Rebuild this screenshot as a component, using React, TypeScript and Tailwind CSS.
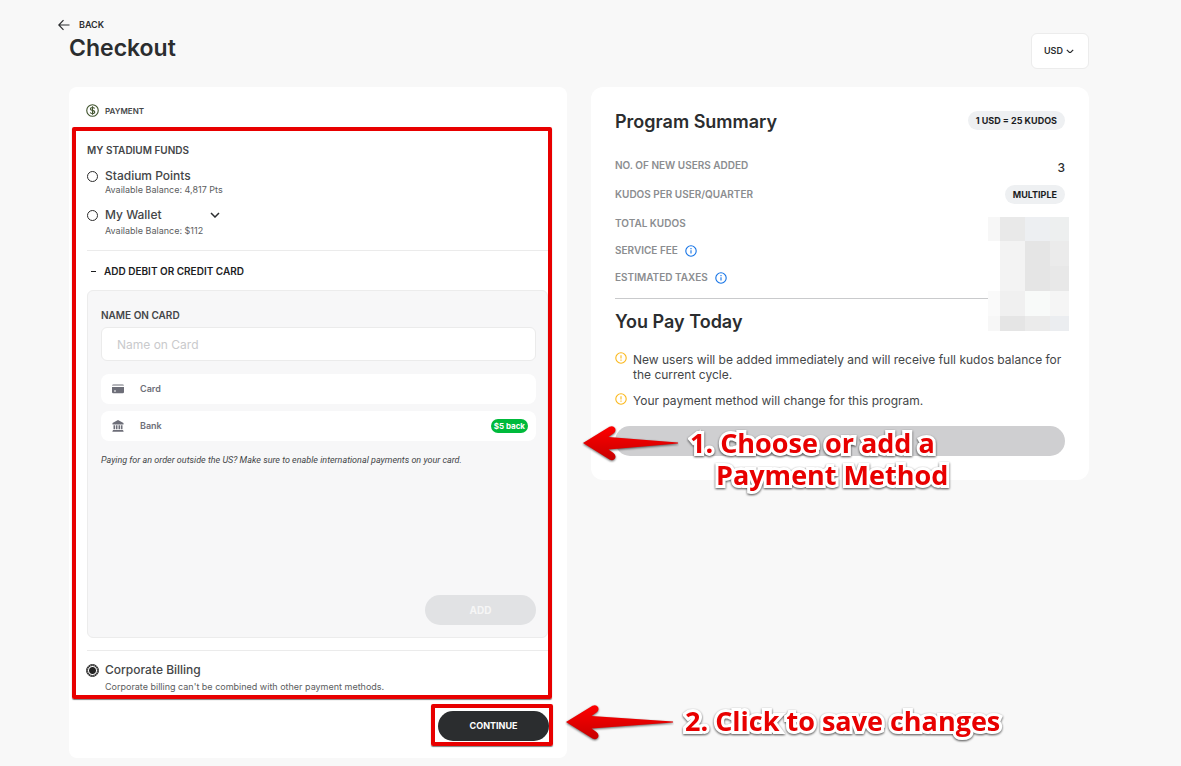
import type { ReactNode } from "react";

const MOSAIC = [
  "bg-[#f7f7f7]", "bg-[#e9e9e9]", "bg-[#edeff2]", "bg-[#edefef]",
  "bg-white", "bg-[#f3f3f3]", "bg-[#e5e5e5]", "bg-[#ebebeb]",
  "bg-white", "bg-[#f3f3f3]", "bg-[#e5e5e5]", "bg-[#e8e8e8]",
  "bg-[#fafafa]", "bg-[#f0f0f0]", "bg-[#f8faf9]", "bg-[#f5f5f5]",
  "bg-[#f7f7f7]", "bg-[#e5e5e5]", "bg-[#ebebeb]", "bg-[#ebedf0]",
];

function Chevron({ className }: { className: string }) {
  return (
    <svg viewBox="0 0 10 6" className={className} fill="none" stroke="currentColor" strokeWidth="1.5" aria-hidden="true">
      <path d="M1 1l4 4 4-4" />
    </svg>
  );
}

function InfoIcon() {
  return (
    <svg viewBox="0 0 12 12" className="size-3 text-[#1473e6]" fill="none" stroke="currentColor" aria-hidden="true">
      <circle cx="6" cy="6" r="5.2" strokeWidth="1.1" />
      <path d="M6 5.2v3.4M6 3v1.2" strokeWidth="1.1" />
    </svg>
  );
}

function AlertIcon() {
  return (
    <svg viewBox="0 0 12 12" className="size-3 shrink-0 text-[#fbb81b]" fill="none" stroke="currentColor" aria-hidden="true">
      <circle cx="6" cy="6" r="5.2" strokeWidth="1.1" />
      <path d="M6 3.2v3.4M6 7.6v1.2" strokeWidth="1.1" />
    </svg>
  );
}

function Arrow({ id, length, className }: { id: string; length: number; className: string }) {
  return (
    <svg viewBox={`0 0 ${length} 38`} width={length} height={38} className={className} aria-hidden="true">
      <defs>
        <linearGradient id={id} x1="0" y1="0" x2="0" y2="1">
          <stop offset="0" stopColor="#ff0000" />
          <stop offset="1" stopColor="#c80000" />
        </linearGradient>
      </defs>
      <path
        d={`M1 18L27.500 1.800Q31 0 33 3Q34.500 6.500 31.500 8.500L26.500 12L${length - 1} 17.500V18.500L26.500 24.500L31.500 28Q34.500 30.500 33 33.500Q31 36.500 27.500 34.500Z`}
        fill={`url(#${id})`}
        className="drop-shadow-[0_1px_1px_rgba(0,0,0,0.6)]"
      />
    </svg>
  );
}

function Radio({ id, checked, className, children }: { id: string; checked?: boolean; className: string; children: ReactNode }) {
  return (
    <div className={`flex items-center gap-[7px] ${className}`}>
      <input
        id={id}
        type="radio"
        name="method"
        defaultChecked={checked}
        className="size-[11px] appearance-none rounded-full border border-[#2c2c2c] bg-white outline-[#2c2c2c] checked:bg-[radial-gradient(circle,#222_0_3px,#fff_4px)] checked:outline"
      />
      <label htmlFor={id} className="text-[12px] font-medium text-[#444648]">
        {children}
      </label>
    </div>
  );
}

function SummaryRow({ label, info, className, children }: { label: string; info?: boolean; className: string; children?: ReactNode }) {
  return (
    <div className={`flex items-center justify-between ${className}`}>
      <dt className="flex items-center gap-[7px] text-[10px] font-semibold text-[#8b8d90]">
        {label}
        {info && <InfoIcon />}
      </dt>
      <dd>{children}</dd>
    </div>
  );
}

const pill = "rounded-full bg-[#eef0f2] px-2 text-[9px] leading-[19px] font-bold text-[#1c1d1f]";
const callout =
  "absolute whitespace-nowrap font-['Open_Sans','Noto_Sans',sans-serif] text-[27px] leading-8 font-bold text-[#e80000] [-webkit-text-stroke:6px_white] [paint-order:stroke_fill] drop-shadow-[0_1px_1px_rgba(0,0,0,0.7)]";

export default function App() {
  return (
    <main className="relative min-h-screen bg-[#f8f8f8] pr-[92px] pb-2 pl-[69px] font-['Inter','Liberation_Sans',sans-serif] text-[#2b2d2f]">
      <header className="flex h-[87px] items-start justify-between">
        <div>
          <a href="#back" className="mt-[18px] -ml-[11px] flex h-[14px] items-center gap-[9px] text-[9px] font-semibold">
            <svg viewBox="0 0 12 12" className="size-3" fill="none" stroke="currentColor" strokeWidth="1.2" aria-hidden="true">
              <path d="M11.500 6H1M5.500 1.200L.8 6l4.700 4.800" />
            </svg>
            BACK
          </a>
          <h1 className="text-[23px] leading-8 font-semibold">Checkout</h1>
        </div>
        <label className="mt-[33px] flex h-9 items-center gap-[3px] rounded-md border border-[#ececec] bg-white pr-[14px] pl-3 text-[9px] font-semibold">
          <select aria-label="Currency" className="appearance-none bg-transparent">
            <option>USD</option>
          </select>
          <Chevron className="w-2" />
        </label>
      </header>

      <div className="grid grid-cols-2 items-start gap-6">
        <form className="rounded-lg bg-white pt-4 pr-[15px] pb-[17px] pl-[3px]">
          <h2 className="flex h-[15px] items-center gap-[6px] pl-[14px] text-[8px] font-semibold text-[#444648]">
            <svg viewBox="0 0 14 14" className="size-[13px] text-[#40532d]" fill="none" stroke="currentColor" aria-hidden="true">
              <circle cx="7" cy="7" r="6.200" strokeWidth="1.200" />
              <path d="M9.300 4.800C8.800 4 8 3.800 7 3.800c-1.300 0-2.300.5-2.300 1.500C4.700 7.400 9.400 6.300 9.400 8.600c0 1.100-1 1.700-2.400 1.700-1.200 0-2.100-.4-2.500-1.300M7 2.300v9.400" strokeWidth="1.200" />
            </svg>
            PAYMENT
          </h2>

          <section className="relative mt-[9px] pt-4 pr-1 pb-[5px] pl-[15px]">
            <h3 className="text-[10px] leading-[14px] font-semibold text-[#444648]">MY STADIUM FUNDS</h3>
            <Radio id="points" className="mt-3 h-[14px]">Stadium Points</Radio>
            <p className="pl-[18px] text-[9px] leading-[14px] text-[#5b5d60]">Available Balance: 4,817 Pts</p>
            <div className="mt-[11px] flex w-[133px] items-center justify-between">
              <Radio id="wallet" className="h-[14px]">My Wallet</Radio>
              <button type="button" aria-label="Show wallets">
                <Chevron className="w-[10px]" />
              </button>
            </div>
            <p className="mt-[2px] pl-[18px] text-[9px] leading-[14px] text-[#5b5d60]">Available Balance: $112</p>

            <div className="mt-3 border-t border-[#ebebeb] pt-[13px]">
              <button type="button" aria-expanded="true" className="flex h-[14px] items-center gap-2 pl-1 text-[10px] font-semibold text-[#1c1d1f]">
                <span className="h-px w-[5px] bg-current" />
                ADD DEBIT OR CREDIT CARD
              </button>
            </div>

            <div className="mt-3 flex flex-col rounded-md border border-[#ececec] bg-[#f7f7f8] pt-[17px] pr-[11px] pb-3 pl-[13px]">
              <label htmlFor="card-name" className="text-[10px] leading-[14px] font-semibold text-[#444648]">NAME ON CARD</label>
              <input
                id="card-name"
                placeholder="Name on Card"
                className="mt-[5px] h-[34px] rounded-md border border-[#ebebeb] bg-white px-[15px] text-[12px] placeholder:text-[#c9cacc]"
              />
              <button type="button" className="mt-[13px] flex h-[30px] items-center gap-4 rounded-lg bg-white px-[11px] text-[9px] font-semibold text-[#6d6e78]">
                <svg viewBox="0 0 12 10" className="w-3" fill="currentColor" aria-hidden="true">
                  <path d="M1.500.5h9Q12 .5 12 1.500H0Q0 .5 1.500.5ZM0 3h12v5q0 1.300-1.300 1.300H1.300Q0 9.300 0 8ZM2 6.500v1h2v-1Z" fillRule="evenodd" />
                </svg>
                Card
              </button>
              <button type="button" className="mt-[7px] flex h-[30px] items-center gap-4 rounded-lg bg-white pr-2 pl-[11px] text-[9px] font-semibold text-[#6d6e78]">
                <svg viewBox="0 0 12 12" className="w-3" fill="currentColor" aria-hidden="true">
                  <path d="M6 0l5.500 3v1.500H.5V3ZM1.500 5.300h1.700v4H1.500ZM4 5.300h1.500v4H4ZM6.500 5.300H8v4H6.500ZM8.800 5.300h1.700v4H8.800ZM1 10h10l.7 1.700H.3Z" />
                </svg>
                Bank
                <span className="ml-auto rounded-full bg-[#00ba3c] px-[3px] text-[8px] leading-[14px] font-bold text-white">$5 back</span>
              </button>
              <p className="mt-3 font-['Roboto','Liberation_Sans',sans-serif] text-[9px] leading-[14px] text-[#444648] italic">
                Paying for an order outside the US? Make sure to enable international payments on your card.
              </p>
              <button type="button" disabled className="mt-32 h-[30px] w-[111px] self-end rounded-full bg-[#e1e2e4] text-[10px] font-bold text-[#f6f6f6]">
                ADD
              </button>
            </div>

            <div className="mt-3 border-t border-[#ebebeb] pt-3">
              <Radio id="corporate" checked className="h-[14px]">Corporate Billing</Radio>
              <p className="mt-[3px] pl-[18px] text-[9px] leading-[14px] text-[#5b5d60]">
                Corporate billing can't be combined with other payment methods.
              </p>
            </div>
            <div className="pointer-events-none absolute inset-0 rounded-xs border-4 border-[#e80000] shadow-[0_1px_1px_rgba(0,0,0,0.5)]" />
          </section>

          <div className="relative mt-3 mr-[3px] ml-auto w-[111px]">
            <button type="submit" className="h-[30px] w-full rounded-full bg-[#2b2d2f] text-[9px] font-bold text-white">CONTINUE</button>
            <div className="pointer-events-none absolute -top-[7px] -right-1 -bottom-[5px] -left-[7px] rounded-xs border-4 border-[#e80000] shadow-[0_1px_1px_rgba(0,0,0,0.5)]" />
          </div>
        </form>

        <section className="relative rounded-xl bg-white p-6">
          <div className="flex h-[22px] items-start justify-between">
            <h2 className="text-[18px] leading-[22px] font-semibold">Program Summary</h2>
            <span className={pill}>1 USD = 25 KUDOS</span>
          </div>
          <dl className="mt-[18px] border-b border-[#c9cacc] pb-[7px]">
            <SummaryRow className="h-[29px]" label="NO. OF NEW USERS ADDED">
              <span className="text-[12px] font-medium">3</span>
            </SummaryRow>
            <SummaryRow className="h-[29px]" label="KUDOS PER USER/QUARTER">
              <span className={`block ${pill}`}>MULTIPLE</span>
            </SummaryRow>
            <SummaryRow className="h-7" label="TOTAL KUDOS" />
            <SummaryRow className="h-[27px]" label="SERVICE FEE" info />
            <SummaryRow className="h-[27px]" label="ESTIMATED TAXES" info />
          </dl>
          <h2 className="mt-3 text-[18px] leading-[22px] font-semibold">You Pay Today</h2>
          <ul className="mt-[19px] flex flex-col gap-[11px] text-[12px] leading-[15px] text-[#444648]">
            <li className="flex gap-[6px]">
              <AlertIcon />
              <span>New users will be added immediately and will receive full kudos balance for the current cycle.</span>
            </li>
            <li className="flex gap-[6px]">
              <AlertIcon />
              <span>Your payment method will change for this program.</span>
            </li>
          </ul>
          <button type="button" disabled aria-label="Place order" className="mt-[18px] block h-[30px] w-full rounded-full bg-[#cfcfd1]" />
          <div className="absolute top-[130px] right-5 grid grid-cols-[12px_25px_25px_19px] grid-rows-[24px_25px_25px_25px_15px]">
            {MOSAIC.map((tone, i) => (
              <span key={i} className={tone} />
            ))}
          </div>
        </section>
      </div>

      <Arrow id="arrow-choose" length={97} className="absolute top-[425px] left-[582px]" />
      <p className={`${callout} top-[427px] left-[690px]`}>
        1. Choose or add a<span className="block pl-[26px]">Payment Method</span>
      </p>
      <Arrow id="arrow-save" length={109} className="absolute top-[704px] left-[565px]" />
      <p className={`${callout} top-[705px] left-[685px]`}>2. Click to save changes</p>
    </main>
  );
}
